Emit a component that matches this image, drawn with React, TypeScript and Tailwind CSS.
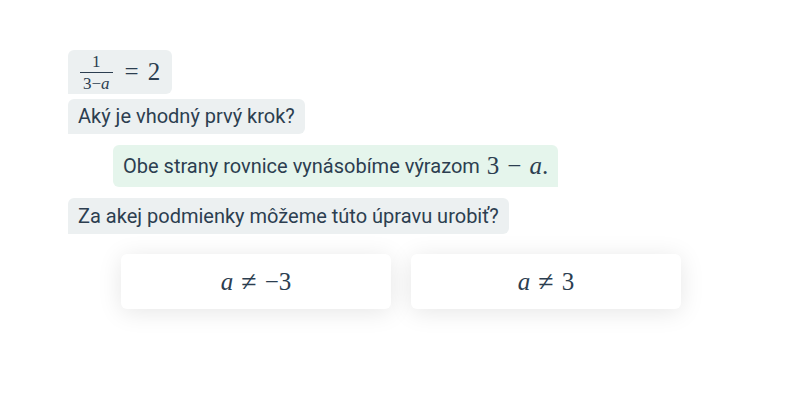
import React from 'react';

const ink = 'text-[#2c3e50]';

const Frac: React.FC = () => (
  <span className="inline-flex flex-col items-center align-middle leading-none text-[17px]">
    <span className="pb-[2px]">1</span>
    <span className="h-px w-full bg-[#2c3e50]" />
    <span className="pt-[2px] px-[3px]">
      3−<i>a</i>
    </span>
  </span>
);

const options = [
  { key: 'neg', lhs: 'a', rhs: '−3' },
  { key: 'pos', lhs: 'a', rhs: '3' },
];

export default function App() {
  return (
    <div className={`w-[800px] h-[400px] bg-white ${ink} font-['Roboto',sans-serif]`}>
      <div className="flex flex-col items-start pt-[50px] pl-[68px]">
        <div className="bg-[#ecf0f1] rounded-md rounded-bl-none pl-3 pr-[12px] h-[44px] flex items-center font-['Liberation_Serif',serif] text-[25px]">
          <Frac />
          <span className="ml-[12px]">=</span>
          <span className="ml-[9px]">2</span>
        </div>

        <div className="mt-[5px] bg-[#ecf0f1] rounded-md rounded-bl-none px-[10px] py-[6px] text-[20px] leading-[23px]">
          Aký je vhodný prvý krok?
        </div>

        <div className="mt-[11px] ml-[45px] bg-[#e5f5ec] rounded-md rounded-br-none px-[10px] h-[42px] flex items-center text-[20px]">
          <span>Obe strany rovnice vynásobíme výrazom</span>
          <span className="ml-[7px] font-['Liberation_Serif',serif] text-[25px]">
            3<span className="mx-[8px]">−</span><i>a</i>.
          </span>
        </div>

        <div className="mt-[11px] bg-[#ecf0f1] rounded-md rounded-bl-none px-[10px] py-[6px] text-[20px] leading-[24px]">
          Za akej podmienky môžeme túto úpravu urobiť?
        </div>
      </div>

      <div className="flex justify-center gap-5 mt-[20px] pl-[2px]">
        {options.map((o) => (
          <div
            key={o.key}
            className="w-[270px] h-[55px] bg-white rounded-md shadow-[0_3px_24px_rgba(0,0,0,0.1)] flex items-center justify-center font-['Liberation_Serif',serif] text-[25px]"
          >
            <i>{o.lhs}</i>
            <span className="mx-[8px] text-[28px] leading-none">≠</span>
            <span>{o.rhs}</span>
          </div>
        ))}
      </div>
    </div>
  );
}
